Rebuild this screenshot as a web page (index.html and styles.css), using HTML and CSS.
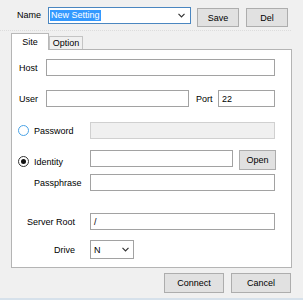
FILE: index.html
```html
<!DOCTYPE html>
<html>
<head>
<meta charset="utf-8">
<link rel="stylesheet" href="styles.css">
</head>
<body>
<div class="window">
  <div class="top">
    <span class="name-lbl">Name</span>
    <div class="combo">
      <span class="sel">New Setting</span>
      <svg class="chev" width="7" height="5" viewBox="0 0 7 5"><polyline points="0.5,0.8 3.5,3.8 6.5,0.8" fill="none" stroke="#333" stroke-width="1.2"/></svg>
    </div>
    <div class="btn save">Save</div>
    <div class="btn del">Del</div>
  </div>

  <div class="tabs">
    <div class="tab active">Site</div>
    <div class="tab">Option</div>
  </div>

  <div class="panel">
    <div class="row r-host">
      <span class="lbl w-short">Host</span>
      <div class="input w-host"></div>
    </div>
    <div class="row r-user">
      <span class="lbl w-short">User</span>
      <div class="input w-user"></div>
      <span class="lbl w-port">Port</span>
      <div class="input w-portin"><span class="val">22</span></div>
    </div>
    <div class="row r-pass">
      <span class="radio-cell"><span class="radio hover"></span><span>Password</span></span>
      <div class="input disabled w-wide"></div>
    </div>
    <div class="row r-ident">
      <span class="radio-cell"><span class="radio checked"></span><span>Identity</span></span>
      <div class="input w-ident"></div>
      <div class="btn open">Open</div>
    </div>
    <div class="row r-phrase">
      <span class="lbl phrase-cell">Passphrase</span>
      <div class="input w-wide"></div>
    </div>
    <div class="row r-root">
      <span class="lbl right-cell">Server Root</span>
      <div class="input w-wide"><span class="val">/</span></div>
    </div>
    <div class="row r-drive">
      <span class="lbl right-cell">Drive</span>
      <div class="input drive"><span class="val">N</span>
        <svg class="chev" width="7" height="5" viewBox="0 0 7 5"><polyline points="0.5,0.8 3.5,3.8 6.5,0.8" fill="none" stroke="#333" stroke-width="1.2"/></svg>
      </div>
    </div>
  </div>

  <div class="footer">
    <div class="btn wide">Connect</div>
    <div class="btn wide">Cancel</div>
  </div>
</div>
</body>
</html>
```

FILE: styles.css
```css
* { box-sizing: border-box; }
html, body { margin: 0; padding: 0; }
body {
  background: #f0f0f0;
  font-family: "Liberation Sans", Arial, sans-serif;
  font-size: 9px;
  color: #000;
  width: 303px;
  height: 300px;
  overflow: hidden;
}
.window {
  height: 300px;
  border-bottom: 2px solid #d6e1eb;
}
.top {
  display: flex;
  align-items: flex-start;
  padding: 7px 0 3px 17px;
  width: 291px;
  border-bottom: 1px dotted #dcdcdc;
}
.name-lbl {
  width: 31px;
  height: 17px;
  line-height: 17px;
}
.combo {
  width: 143px;
  height: 17px;
  border: 1px solid #4a86c0;
  background: #fff;
  display: flex;
  align-items: center;
  padding-left: 1px;
  padding-right: 5px;
}
.sel {
  background: #3399ff;
  color: #fff;
  height: 11px;
  line-height: 11px;
  padding: 0 1px;
}
.chev { margin-left: auto; }
.btn {
  background: #e1e1e1;
  border: 1px solid #adadad;
  display: flex;
  align-items: center;
  justify-content: center;
}
.save { margin-left: 6px; margin-top: 1px; width: 42px; height: 19px; }
.del { margin-left: 7px; margin-top: 1px; width: 42px; height: 19px; }

.tabs {
  display: flex;
  align-items: flex-end;
  margin: 2px 0 -1px 11px;
  position: relative;
  z-index: 1;
}
.tab {
  border: 1px solid #c4c4c4;
  border-bottom: none;
  background: #f0f0f0;
  width: 34px;
  height: 13px;
  margin-bottom: 1px;
  display: flex;
  align-items: center;
  justify-content: center;
}
.tab.active {
  background: #fff;
  width: 38px;
  height: 17px;
  margin-bottom: 0;
  border-color: #b8b8b8;
  padding-bottom: 1px;
}
.panel {
  margin-left: 11px;
  width: 281px;
  height: 219px;
  background: #fff;
  border: 1px solid #b4b4b4;
}
.row {
  display: flex;
  align-items: center;
}
.lbl { display: block; }
.input {
  background: #fff;
  border: 1px solid #a2a2a2;
  height: 17px;
  display: flex;
  align-items: center;
  padding-left: 3px;
}
.input.disabled { background: #f0f0f0; border-color: #d0d0d0; }
.val { line-height: 12px; }

.r-host { margin-top: 9px; padding-left: 7px; }
.w-short { width: 27px; }
.w-host { width: 229px; }
.r-user { margin-top: 14px; padding-left: 7px; }
.w-user { width: 143px; }
.w-port { width: 22px; margin-left: 7px; }
.w-portin { width: 57px; }

.radio-cell {
  width: 78px;
  padding-left: 6px;
  display: flex;
  align-items: center;
  gap: 5px;
}
.radio {
  width: 11px;
  height: 11px;
  border-radius: 50%;
  border: 1px solid #333;
  background: #fff;
  display: flex;
  align-items: center;
  justify-content: center;
}
.radio.hover { border-color: #4aa3e6; }
.radio.checked::after {
  content: "";
  width: 5px;
  height: 5px;
  border-radius: 50%;
  background: #111;
}
.r-pass { margin-top: 15px; }
.w-wide { width: 185px; }
.r-ident { margin-top: 11px; align-items: flex-start; height: 20px; }
.r-ident .radio-cell { margin-top: 6px; }
.w-ident { width: 143px; }
.open { width: 37px; height: 20px; margin-left: 6px; }
.r-phrase { margin-top: 4px; }
.phrase-cell { width: 78px; padding-left: 22px; }
.right-cell { width: 78px; text-align: right; padding-right: 15px; }
.r-root { margin-top: 22px; }
.r-drive { margin-top: 10px; }
.drive { width: 44px; height: 19px; padding-right: 4px; }

.footer {
  display: flex;
  gap: 7px;
  padding-left: 164px;
  margin-top: 5px;
}
.wide { width: 60px; height: 20px; }
```
